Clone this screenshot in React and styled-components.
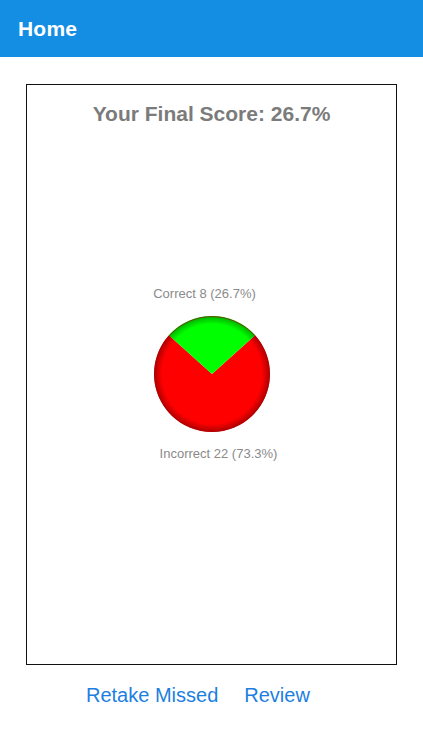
import React from "react";
import styled, { createGlobalStyle } from "styled-components";

const GlobalStyle = createGlobalStyle`
  html, body {
    margin: 0;
    padding: 0;
    background: #ffffff;
    font-family: "Liberation Sans", Arial, sans-serif;
  }
`;

const results = {
  correct: 8,
  incorrect: 22,
};

const Page = () => {
  const total = results.correct + results.incorrect;
  const pct = (results.correct / total) * 100;
  const correctPct = pct.toFixed(1);
  const incorrectPct = (100 - pct).toFixed(1);

  return (
    <Wrapper>
      <GlobalStyle />
      <Header>
        <HeaderTitle>Home</HeaderTitle>
      </Header>

      <Card>
        <Score>Your Final Score: {correctPct}%</Score>

        <Chart>
          <SliceLabel shift={-7}>
            Correct {results.correct} ({correctPct}%)
          </SliceLabel>
          <Pie ratio={results.correct / total} />
          <SliceLabel shift={7}>
            Incorrect {results.incorrect} ({incorrectPct}%)
          </SliceLabel>
        </Chart>
      </Card>

      <Actions>
        <ActionButton type="button">Retake Missed</ActionButton>
        <ActionButton type="button">Review</ActionButton>
      </Actions>
    </Wrapper>
  );
};

// pie drawn with the correct slice centred on the top
const Pie = ({ ratio }) => {
  const r = 58;
  const c = 60;
  const half = ratio * Math.PI; // half the angle of the green slice
  const x1 = c - r * Math.sin(half);
  const x2 = c + r * Math.sin(half);
  const y = c - r * Math.cos(half);
  const large = ratio > 0.5 ? 1 : 0;

  return (
    <PieSvg width="120" height="120" viewBox="0 0 120 120">
      <defs>
        <radialGradient id="rim" cx="60" cy="60" r="58" gradientUnits="userSpaceOnUse">
          <stop offset="0.86" stopColor="#000" stopOpacity="0" />
          <stop offset="1" stopColor="#000" stopOpacity="0.32" />
        </radialGradient>
      </defs>
      <path
        d={`M${c} ${c} L${x2} ${y} A${r} ${r} 0 ${1 - large} 1 ${x1} ${y} Z`}
        fill="#ff0000"
      />
      <path
        d={`M${c} ${c} L${x1} ${y} A${r} ${r} 0 ${large} 1 ${x2} ${y} Z`}
        fill="#00ff00"
      />
      <circle cx={c} cy={c} r={r} fill="url(#rim)" />
      <circle cx={c} cy={c} r={r - 0.5} fill="none" stroke="#b30000" strokeOpacity="0.55" />
    </PieSvg>
  );
};

export default function App() {
  return <Page />;
}

const Wrapper = styled.div`
  display: flex;
  flex-direction: column;
  min-height: 750px;
`;

const Header = styled.header`
  height: 57px;
  background: #148ee3;
  display: flex;
  align-items: center;
  padding: 0 18px;
  box-sizing: border-box;
`;

const HeaderTitle = styled.h1`
  margin: 0;
  color: #ffffff;
  font-size: 21px;
  font-weight: 700;
  letter-spacing: 0.2px;
`;

const Card = styled.section`
  margin: 27px 26px 0 26px;
  height: 581px;
  border: 1.5px solid #111111;
  box-sizing: border-box;
  display: flex;
  flex-direction: column;
  align-items: center;
`;

const Score = styled.h2`
  margin: 17px 0 0;
  font-size: 21px;
  line-height: 24px;
  font-weight: 700;
  color: #7b7b7b;
`;

const Chart = styled.div`
  margin-top: 160px;
  display: flex;
  flex-direction: column;
  align-items: center;
`;

const SliceLabel = styled.span`
  font-size: 13px;
  line-height: 16px;
  color: #8a8a8a;
  margin-left: ${(p) => p.shift * 2}px;
`;

const PieSvg = styled.svg`
  display: block;
  margin: 12px 0 12px;
`;

const Actions = styled.div`
  display: flex;
  gap: 26px;
  padding: 18px 0 0 86px;
`;

const ActionButton = styled.button`
  border: none;
  background: none;
  padding: 0;
  font-family: "Liberation Sans", Arial, sans-serif;
  font-size: 20px;
  line-height: 24px;
  color: #1c7fe0;
  cursor: pointer;
`;
